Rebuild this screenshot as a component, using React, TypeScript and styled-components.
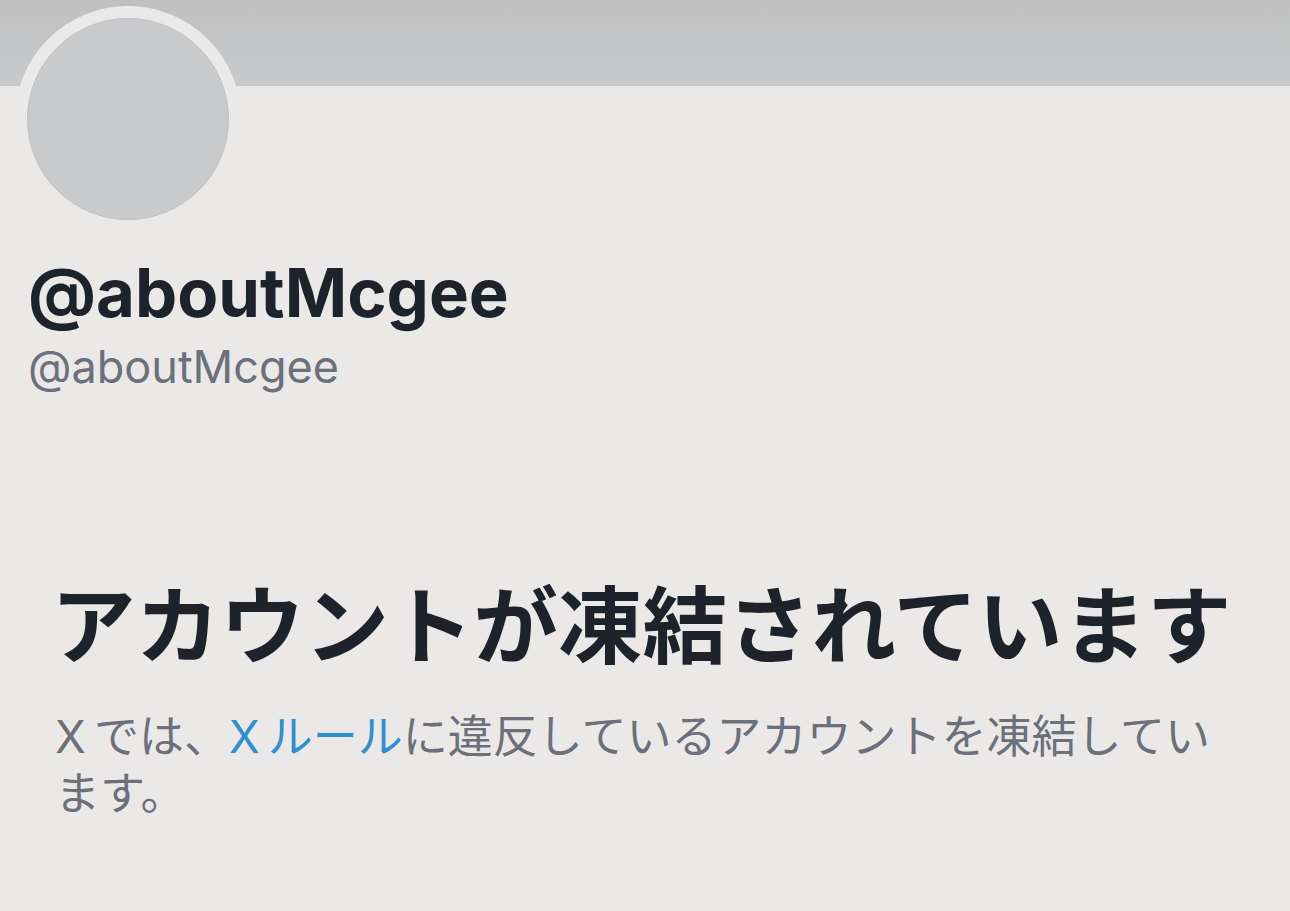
import styled, { createGlobalStyle } from "styled-components";

const GlobalStyle = createGlobalStyle`
  html, body {
    margin: 0;
    padding: 0;
    background: #ebe9e8;
  }
  body {
    font-family: Inter, "Noto Sans CJK JP", sans-serif;
    -webkit-font-smoothing: antialiased;
  }
`;

const Page = styled.div`
  width: 1290px;
  height: 911px;
  overflow: hidden;
  background: #ebe9e8;
`;

const Banner = styled.div`
  height: 86px;
  background: linear-gradient(#c0c0c1, #c8c9ca);
`;

const Profile = styled.div`
  padding: 0 28px;
`;

const AvatarRing = styled.div`
  width: 202px;
  height: 202px;
  margin: -80px 0 0 -13px;
  border: 12px solid #ebe9e8;
  border-radius: 50%;
  background: #ebe9e8;
`;

const Avatar = styled.div`
  width: 100%;
  height: 100%;
  box-sizing: border-box;
  border-radius: 50%;
  background: #c8cacb;
  border: 1px solid #bec0c1;
`;

const Names = styled.div`
  display: flex;
  flex-direction: column;
  margin-top: 21px;
`;

const DisplayName = styled.div`
  font-family: Inter, "Liberation Sans", sans-serif;
  font-weight: 700;
  font-size: 67px;
  line-height: 80px;
  color: #1e222b;
`;

const Handle = styled.div`
  font-family: Inter, "Liberation Sans", sans-serif;
  font-weight: 400;
  font-size: 45px;
  line-height: 54px;
  color: #6b7079;
  margin-top: 7px;
`;

const Notice = styled.div`
  padding: 176px 30px 0 51px;
`;

const NoticeTitle = styled.h1`
  margin: 0;
  font-family: "Noto Sans CJK JP", sans-serif;
  font-weight: 700;
  font-size: 84.5px;
  line-height: 100px;
  color: #1e222b;
  white-space: nowrap;
`;

const NoticeText = styled.p`
  margin: 38px 0 0;
  padding-left: 4px;
  max-width: 1160px;
  font-family: Inter, "Noto Sans CJK JP", sans-serif;
  font-weight: 400;
  font-size: 45px;
  line-height: 57px;
  color: #6b7079;
`;

const RuleLink = styled.a`
  color: #2f8fd0;
  text-decoration: none;
`;

export default function App() {
  return (
    <Page>
      <GlobalStyle />
      <Banner />
      <Profile>
        <AvatarRing>
          <Avatar />
        </AvatarRing>
        <Names>
          <DisplayName>@aboutMcgee</DisplayName>
          <Handle>@aboutMcgee</Handle>
        </Names>
      </Profile>
      <Notice>
        <NoticeTitle>アカウントが凍結されています</NoticeTitle>
        <NoticeText>
          X{"\u2009"}では、<RuleLink href="#">X{"\u2009"}ルール</RuleLink>に違反しているアカウントを凍結しています。
        </NoticeText>
      </Notice>
    </Page>
  );
}
